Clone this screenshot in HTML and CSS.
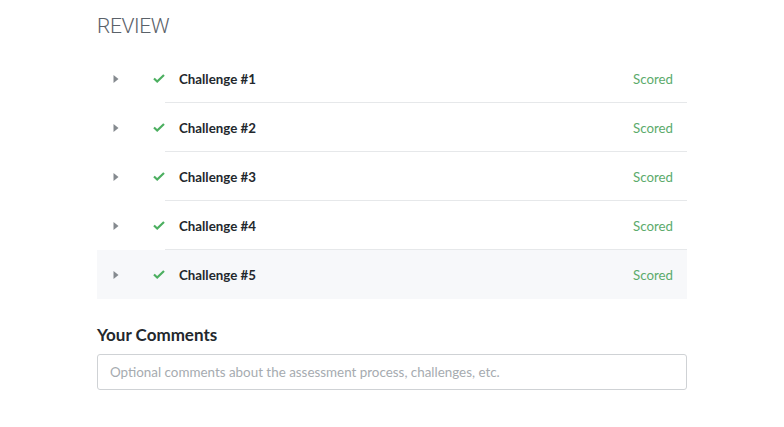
FILE: index.html
```html
<!DOCTYPE html>
<html>
<head>
<meta charset="utf-8">
<link rel="stylesheet" href="styles.css">
</head>
<body>
<div class="page">
  <h2 class="title">REVIEW</h2>
  <div class="list">
    <div class="row">
      <span class="caret"><svg width="6" height="10" viewBox="0 0 6 10"><path d="M0.5 1 L5.5 5 L0.5 9 Z" fill="#858a8f"/></svg></span>
      <span class="check"><svg width="12" height="9" viewBox="0 0 12 9"><path d="M1 4.5 L4.2 7.5 L11 1" fill="none" stroke="#4caf60" stroke-width="2.2"/></svg></span>
      <span class="name">Challenge #1</span>
      <span class="status">Scored</span>
    </div>
    <div class="row">
      <span class="caret"><svg width="6" height="10" viewBox="0 0 6 10"><path d="M0.5 1 L5.5 5 L0.5 9 Z" fill="#858a8f"/></svg></span>
      <span class="check"><svg width="12" height="9" viewBox="0 0 12 9"><path d="M1 4.5 L4.2 7.5 L11 1" fill="none" stroke="#4caf60" stroke-width="2.2"/></svg></span>
      <span class="name">Challenge #2</span>
      <span class="status">Scored</span>
    </div>
    <div class="row">
      <span class="caret"><svg width="6" height="10" viewBox="0 0 6 10"><path d="M0.5 1 L5.5 5 L0.5 9 Z" fill="#858a8f"/></svg></span>
      <span class="check"><svg width="12" height="9" viewBox="0 0 12 9"><path d="M1 4.5 L4.2 7.5 L11 1" fill="none" stroke="#4caf60" stroke-width="2.2"/></svg></span>
      <span class="name">Challenge #3</span>
      <span class="status">Scored</span>
    </div>
    <div class="row">
      <span class="caret"><svg width="6" height="10" viewBox="0 0 6 10"><path d="M0.5 1 L5.5 5 L0.5 9 Z" fill="#858a8f"/></svg></span>
      <span class="check"><svg width="12" height="9" viewBox="0 0 12 9"><path d="M1 4.5 L4.2 7.5 L11 1" fill="none" stroke="#4caf60" stroke-width="2.2"/></svg></span>
      <span class="name">Challenge #4</span>
      <span class="status">Scored</span>
    </div>
    <div class="row row-hover">
      <span class="caret"><svg width="6" height="10" viewBox="0 0 6 10"><path d="M0.5 1 L5.5 5 L0.5 9 Z" fill="#858a8f"/></svg></span>
      <span class="check"><svg width="12" height="9" viewBox="0 0 12 9"><path d="M1 4.5 L4.2 7.5 L11 1" fill="none" stroke="#4caf60" stroke-width="2.2"/></svg></span>
      <span class="name">Challenge #5</span>
      <span class="status">Scored</span>
    </div>
  </div>
  <h3 class="comments-title">Your Comments</h3>
  <input class="comments" type="text" placeholder="Optional comments about the assessment process, challenges, etc.">
</div>
</body>
</html>
```
FILE: styles.css
```css
html, body {
  margin: 0;
  padding: 0;
  background: #ffffff;
}
body {
  font-family: Lato, "Open Sans", sans-serif;
  color: #23282d;
}
.page {
  width: 590px;
  margin-left: 97px;
  padding-top: 13px;
}
.title {
  margin: 0;
  font-family: Roboto, Lato, sans-serif;
  font-size: 21px;
  font-weight: 300;
  color: #5a6169;
  letter-spacing: -0.4px;
  line-height: 26px;
  height: 41px;
}
.list {
  display: flex;
  flex-direction: column;
}
.row {
  position: relative;
  display: flex;
  align-items: center;
  height: 49px;
}
.row + .row::before {
  content: "";
  position: absolute;
  top: -1px;
  left: 68px;
  right: 0;
  height: 1px;
  background: #e6e8ea;
}
.row-hover {
  background: #f7f8fa;
}
.caret {
  display: flex;
  width: 6px;
  margin-left: 16px;
}
.check {
  display: flex;
  margin-left: 34px;
  width: 12px;
}
.name {
  margin-left: 14px;
  font-size: 13.3px;
  font-weight: 700;
  color: #23282d;
}
.status {
  margin-left: auto;
  margin-right: 14px;
  font-size: 13.3px;
  color: #5cab6c;
}
.comments-title {
  margin: 26px 0 0 0;
  font-size: 17px;
  font-weight: 700;
  color: #23282d;
  line-height: 20px;
}
.comments {
  display: block;
  box-sizing: border-box;
  width: 590px;
  height: 36px;
  margin-top: 9px;
  padding: 0 12px;
  border: 1px solid #cfd2d5;
  border-radius: 3px;
  font-family: Lato, "Open Sans", sans-serif;
  font-size: 13.4px;
  color: #333;
  outline: none;
}
.comments::placeholder {
  color: #a6abb0;
}
```
